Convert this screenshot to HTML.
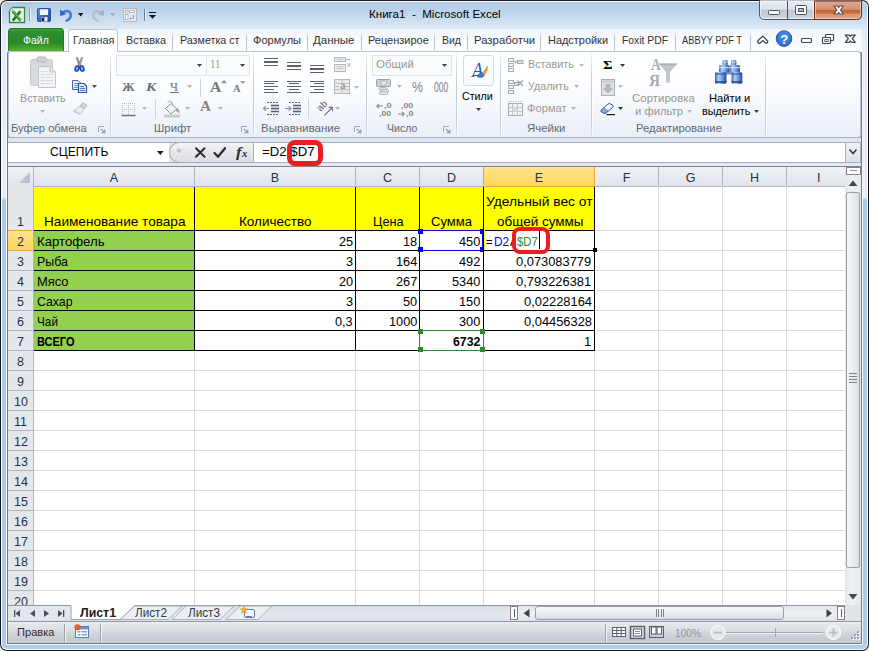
<!DOCTYPE html><html><head><meta charset="utf-8"><title>Excel</title><style>
*{box-sizing:border-box;margin:0;padding:0}
html,body{width:869px;height:651px;overflow:hidden;background:#e8e8e8;font-family:"Liberation Sans",sans-serif;}
.a{position:absolute}
#win{position:absolute;left:0;top:0;width:869px;height:651px;border-radius:7px;background:#15181c;overflow:hidden}
#w1{position:absolute;left:1px;top:1px;width:867px;height:649px;border-radius:6px;background:#fbfdff}
#glass{position:absolute;left:2px;top:2px;width:865px;height:647px;border-radius:5px;
 background:linear-gradient(180deg,#afc9e5 0px,#b8d0ea 7px,#c6daef 15px,#d6e4f3 23px,#e0ebf6 30px,#e6eef7 60px,#e6eef8 195px,#aac8e8 198px,#aecbea 640px,#b5cfec 647px);}
#inner{position:absolute;left:6px;top:27px;width:857px;height:618px;background:linear-gradient(180deg,rgba(246,249,252,.0) 0,#f3f7fb 24px,#f6f9fc 100%)}
.t{position:absolute;white-space:nowrap;line-height:1}
.ui{font-size:12px;color:#1e1e1e}
.dis{color:#8d8d8d}
.cell{position:absolute;white-space:nowrap;line-height:1;font-size:14.5px;color:#000}
svg{position:absolute;overflow:visible}
</style></head><body>
<div id="win"><div id="w1"></div><div id="glass"></div><div id="inner"></div>
<div class="t" style="left:368.80px;top:9.07px;font-size:11.5px;color:#000;transform:scaleX(1.0070);transform-origin:0 0;white-space:pre;">Книга1  -  Microsoft Excel</div>
<div class="a" style="left:7px;top:51px;width:855px;height:593px;background:#6f7c8c;border-radius:3px 3px 0 0"></div>
<div class="a" style="left:8px;top:29px;width:853px;height:23px;background:linear-gradient(180deg,rgba(255,255,255,.55),rgba(255,255,255,.8))"></div>
<div class="a" style="left:8px;top:28px;width:56px;height:23px;border-radius:4px 4px 0 0;background:linear-gradient(180deg,#4aa23a 0,#2f8f30 12%,#2a882c 62%,#3f9a2c 78%,#58b02e 100%);border:1px solid #237a25;border-bottom:none"></div>
<div class="t" style="left:23.00px;top:34.69px;font-size:11px;color:#fff;transform:scaleX(0.9544);transform-origin:0 0;">Файл</div>
<div class="a" style="left:8px;top:51px;width:853px;height:87px;border:1px solid #b9c4d3;border-radius:3px;background:linear-gradient(180deg,#ffffff 0,#fdfeff 35%,#f3f6fb 70%,#eaeff6 100%)"></div>
<div class="a" style="left:68px;top:29px;width:50px;height:23px;border:1px solid #b9c4d3;border-bottom:none;border-radius:3px 3px 0 0;background:#fff"></div>
<div class="t" style="left:72.50px;top:34.69px;font-size:11px;color:#333;transform:scaleX(0.9861);transform-origin:0 0;">Главная</div>
<div class="t" style="left:126.30px;top:34.69px;font-size:11px;color:#333;transform:scaleX(0.9782);transform-origin:0 0;">Вставка</div>
<div class="t" style="left:180.00px;top:34.69px;font-size:11px;color:#333;transform:scaleX(0.9733);transform-origin:0 0;">Разметка ст</div>
<div class="t" style="left:252.50px;top:34.69px;font-size:11px;color:#333;transform:scaleX(1.0026);transform-origin:0 0;">Формулы</div>
<div class="t" style="left:313.00px;top:34.69px;font-size:11px;color:#333;transform:scaleX(1.0444);transform-origin:0 0;">Данные</div>
<div class="t" style="left:368.00px;top:34.69px;font-size:11px;color:#333;transform:scaleX(0.9986);transform-origin:0 0;">Рецензирое</div>
<div class="t" style="left:442.00px;top:34.69px;font-size:11px;color:#333;transform:scaleX(0.9543);transform-origin:0 0;">Вид</div>
<div class="t" style="left:473.80px;top:34.69px;font-size:11px;color:#333;transform:scaleX(1.0313);transform-origin:0 0;">Разработчи</div>
<div class="t" style="left:548.00px;top:34.69px;font-size:11px;color:#333;transform:scaleX(0.9940);transform-origin:0 0;">Надстройки</div>
<div class="t" style="left:622.00px;top:34.69px;font-size:11px;color:#333;transform:scaleX(0.9408);transform-origin:0 0;">Foxit PDF</div>
<div class="t" style="left:682.00px;top:34.69px;font-size:11px;color:#333;transform:scaleX(0.8437);transform-origin:0 0;">ABBYY PDF T</div>
<div class="a" style="left:172px;top:31px;width:1px;height:19px;background:linear-gradient(180deg,rgba(180,192,208,0),#b4c0d0 40%,#b4c0d0 100%)"></div>
<div class="a" style="left:246px;top:31px;width:1px;height:19px;background:linear-gradient(180deg,rgba(180,192,208,0),#b4c0d0 40%,#b4c0d0 100%)"></div>
<div class="a" style="left:307px;top:31px;width:1px;height:19px;background:linear-gradient(180deg,rgba(180,192,208,0),#b4c0d0 40%,#b4c0d0 100%)"></div>
<div class="a" style="left:361px;top:31px;width:1px;height:19px;background:linear-gradient(180deg,rgba(180,192,208,0),#b4c0d0 40%,#b4c0d0 100%)"></div>
<div class="a" style="left:434px;top:31px;width:1px;height:19px;background:linear-gradient(180deg,rgba(180,192,208,0),#b4c0d0 40%,#b4c0d0 100%)"></div>
<div class="a" style="left:467px;top:31px;width:1px;height:19px;background:linear-gradient(180deg,rgba(180,192,208,0),#b4c0d0 40%,#b4c0d0 100%)"></div>
<div class="a" style="left:540px;top:31px;width:1px;height:19px;background:linear-gradient(180deg,rgba(180,192,208,0),#b4c0d0 40%,#b4c0d0 100%)"></div>
<div class="a" style="left:614px;top:31px;width:1px;height:19px;background:linear-gradient(180deg,rgba(180,192,208,0),#b4c0d0 40%,#b4c0d0 100%)"></div>
<div class="a" style="left:675px;top:31px;width:1px;height:19px;background:linear-gradient(180deg,rgba(180,192,208,0),#b4c0d0 40%,#b4c0d0 100%)"></div>
<svg style="left:8px;top:6px" width="18" height="18">
<path d="M4.500,1.500 H16.500 V16.500 H1.500 V4.500 Z" fill="#eef2ee" stroke="#2f8f2f" stroke-width="1.300"/>
<path d="M1.500,4.500 L4.500,1.500 V4.500 Z" fill="#d5dde8" stroke="#9aa6b4" stroke-width=".6"/>
<path d="M4.800,5.200 L12.600,14.600 M12.600,5.200 L4.800,14.600" stroke="#237d23" stroke-width="2.800"/>
<path d="M5.300,5 L12.300,13.600" stroke="#79cc55" stroke-width="1.100"/>
<path d="M12.500,6 L14.500,8 M12.500,14 L14.500,12" stroke="#c9d2c9" stroke-width="1"/>
</svg>
<div class="a" style="left:29px;top:9px;width:1px;height:12px;background:#8d97a5"></div>
<div class="a" style="left:30px;top:9px;width:1px;height:12px;background:rgba(255,255,255,.7)"></div>
<svg style="left:37px;top:8px" width="14" height="14">
<defs><linearGradient id="sv" x1="0" y1="0" x2="1" y2="1"><stop offset="0" stop-color="#6a96dc"/><stop offset=".5" stop-color="#3a68c2"/><stop offset="1" stop-color="#2446a0"/></linearGradient></defs><rect x=".5" y=".5" width="13" height="13" rx="1" fill="url(#sv)" stroke="#2a4c9c" stroke-width="1"/>
<rect x="3" y="1" width="8" height="6" fill="#f4f7fb"/>
<rect x="3" y="1" width="8" height="1.2" fill="#c9d6ea"/>
<rect x="4" y="9" width="6.5" height="4.5" fill="#e6ebf3"/>
<rect x="4.5" y="9.5" width="2.8" height="3.5" fill="#1d1d2b"/>
</svg>
<svg style="left:59px;top:8px" width="15" height="14">
<path d="M3.2,5.2 C5.5,2.2 11.2,2 11.6,6.4 C11.9,9.6 9.8,11.8 7.6,12.6" fill="none" stroke="#3d79d6" stroke-width="2.6" stroke-linecap="round"/>
<polygon points="1,1.5 1.2,8 7.2,6.2" fill="#2f66c4"/>
</svg>
<svg style="left:78px;top:13px" width="6" height="4"><polygon points="0,0 5.4,0 2.7,3.4" fill="#111"/></svg>
<svg style="left:91px;top:8px" width="15" height="14">
<path d="M10.8,5.6 C8.6,2.2 2.6,2.2 2.4,6.6 C2.2,9.8 4.2,11.8 6.4,12.6" fill="none" stroke="#b9bfc8" stroke-width="2.6" stroke-linecap="round"/>
<polygon points="13,1.5 12.8,8 6.8,6.2" fill="#aab1bb"/>
</svg>
<svg style="left:110px;top:13px" width="6" height="4"><polygon points="0,0 5.4,0 2.7,3.4" fill="#a3abb6"/></svg>
<svg style="left:123px;top:8px" width="14" height="14">
<rect x=".5" y=".5" width="13" height="13" fill="#e9ebee" stroke="#b3b8bf" stroke-width="1"/>
<rect x="2.5" y="2.5" width="2.5" height="2.5" fill="#fff" stroke="#a7adb6" stroke-width=".8"/>
<rect x="6.5" y="2.5" width="5" height="2" fill="#fff" stroke="#a7adb6" stroke-width=".8"/>
<rect x="2.5" y="6.5" width="2.5" height="5" fill="#fff" stroke="#a7adb6" stroke-width=".8"/>
<path d="M7,10.5 H10.5 V7.5 M9.5,8.5 L10.5,7.2 L11.5,8.5 M8,9.5 L6.8,10.5 L8,11.5" fill="none" stroke="#9aa1ab" stroke-width=".9"/>
</svg>
<div class="a" style="left:144px;top:9px;width:1px;height:12px;background:#6f7883"></div>
<div class="a" style="left:145px;top:9px;width:1px;height:12px;background:rgba(255,255,255,.7)"></div>
<div class="a" style="left:149px;top:12px;width:7px;height:1.2px;background:#111"></div>
<svg style="left:149px;top:15.300px" width="8" height="5"><polygon points="0,0 7,0 3.5,3.800" fill="#111"/></svg>
<svg style="left:758px;top:0px" width="106" height="22">
<defs>
<linearGradient id="gb" x1="0" y1="0" x2="0" y2="1"><stop offset="0" stop-color="#e9eef4"/><stop offset=".48" stop-color="#dbe3ec"/><stop offset=".5" stop-color="#bcc7d4"/><stop offset="1" stop-color="#cdd6e1"/></linearGradient>
<linearGradient id="gc" x1="0" y1="0" x2="0" y2="1"><stop offset="0" stop-color="#dcaa98"/><stop offset=".3" stop-color="#d89a82"/><stop offset=".47" stop-color="#d48a68"/><stop offset=".5" stop-color="#c4662e"/><stop offset=".66" stop-color="#c86e36"/><stop offset=".7" stop-color="#d89474"/><stop offset=".95" stop-color="#dba286"/><stop offset="1" stop-color="#f1dcb8"/></linearGradient>
</defs>
<path d="M1.5,0 V14.5 Q1.5,19.5 6.5,19.5 H98.5 Q103.5,19.5 103.5,14.5 V0 Z" fill="url(#gb)" stroke="#4d5560" stroke-width="1"/>
<path d="M56.5,1 V19.5 H98.5 Q103.5,19.5 103.5,14.5 V1 Z" fill="url(#gc)" stroke="#6b2a1a" stroke-width="1"/>
<path d="M2.5,1 V14.5 Q2.5,18.5 6.5,18.5 H55.5 V1 Z" fill="none" stroke="rgba(255,255,255,.65)" stroke-width="1"/>
<path d="M57.5,1.5 V18.5 H98.5 Q102.5,18.5 102.5,14.5 V1.5" fill="none" stroke="rgba(255,230,200,.55)" stroke-width="1"/>
<path d="M29.5,1 V19" stroke="#4d5560" stroke-width="1"/>
<rect x="10.5" y="10.5" width="11" height="4" rx=".8" fill="#fff" stroke="#4a5561" stroke-width="1"/>
<rect x="37.5" y="5.500" width="11" height="9" rx=".8" fill="#fff" stroke="#4a5561" stroke-width="1"/>
<rect x="40.500" y="8.5" width="5" height="3" fill="#aeb8c6" stroke="#4a5561" stroke-width="1"/>
<polygon points="76.00,6.00 79.70,6.00 80.70,7.40 81.70,6.00 85.40,6.00 82.55,10.00 85.40,14.00 81.70,14.00 80.70,12.60 79.70,14.00 76.00,14.00 78.85,10.00" fill="#fff" stroke="#5b4d52" stroke-width="1.200" stroke-linejoin="round"/>
</svg>
<div class="a" style="left:750px;top:31px;width:1px;height:19px;background:linear-gradient(180deg,rgba(180,192,208,0),#b4c0d0 40%,#b4c0d0 100%)"></div>
<svg style="left:755px;top:30px" width="108" height="20">
<path d="M4.300,11.600 L7.700,8.200 L11.100,11.600" fill="none" stroke="#3e4650" stroke-width="4.400" stroke-linejoin="round" stroke-linecap="round"/>
<path d="M4.300,11.600 L7.700,8.200 L11.100,11.600" fill="none" stroke="#fff" stroke-width="2" stroke-linejoin="round" stroke-linecap="round"/>
<circle cx="29" cy="8.600" r="7.800" fill="#2f74d0" stroke="#1f58b0" stroke-width="1"/>
<circle cx="29" cy="6.500" r="6" fill="#4d8fe6" opacity=".55"/>
<rect x="46.500" y="8.500" width="10" height="4" rx="1" fill="#fff" stroke="#3e4650" stroke-width="1.200"/>
<rect x="70.500" y="4.500" width="8" height="6" rx=".8" fill="#fff" stroke="#3e4650" stroke-width="1.200"/>
<rect x="67.500" y="7.500" width="8" height="6" rx=".8" fill="#fff" stroke="#3e4650" stroke-width="1.200"/>
<rect x="69.800" y="9.600" width="3.400" height="1.800" fill="#cdd3dc" stroke="#3e4650" stroke-width=".8"/>
<polygon points="90.30,5.10 94.10,5.10 95.30,6.49 96.50,5.10 100.30,5.10 97.20,8.70 100.30,12.30 96.50,12.30 95.30,10.91 94.10,12.30 90.30,12.30 93.40,8.70" fill="#fff" stroke="#3e4650" stroke-width="1.300" stroke-linejoin="round"/>
</svg>
<div class="t" style="left:780.3px;top:32.5px;font-size:13px;font-weight:bold;color:#fff">?</div>
<div class="a" style="left:110px;top:53px;width:1px;height:83px;background:linear-gradient(180deg,rgba(200,207,218,.2),#c5ccd7 30%,#c5ccd7 85%,rgba(200,207,218,.4))"></div>
<div class="a" style="left:111px;top:53px;width:1px;height:83px;background:rgba(255,255,255,.8)"></div>
<div class="a" style="left:253px;top:53px;width:1px;height:83px;background:linear-gradient(180deg,rgba(200,207,218,.2),#c5ccd7 30%,#c5ccd7 85%,rgba(200,207,218,.4))"></div>
<div class="a" style="left:254px;top:53px;width:1px;height:83px;background:rgba(255,255,255,.8)"></div>
<div class="a" style="left:366px;top:53px;width:1px;height:83px;background:linear-gradient(180deg,rgba(200,207,218,.2),#c5ccd7 30%,#c5ccd7 85%,rgba(200,207,218,.4))"></div>
<div class="a" style="left:367px;top:53px;width:1px;height:83px;background:rgba(255,255,255,.8)"></div>
<div class="a" style="left:456px;top:53px;width:1px;height:83px;background:linear-gradient(180deg,rgba(200,207,218,.2),#c5ccd7 30%,#c5ccd7 85%,rgba(200,207,218,.4))"></div>
<div class="a" style="left:457px;top:53px;width:1px;height:83px;background:rgba(255,255,255,.8)"></div>
<div class="a" style="left:500px;top:53px;width:1px;height:83px;background:linear-gradient(180deg,rgba(200,207,218,.2),#c5ccd7 30%,#c5ccd7 85%,rgba(200,207,218,.4))"></div>
<div class="a" style="left:501px;top:53px;width:1px;height:83px;background:rgba(255,255,255,.8)"></div>
<div class="a" style="left:591px;top:53px;width:1px;height:83px;background:linear-gradient(180deg,rgba(200,207,218,.2),#c5ccd7 30%,#c5ccd7 85%,rgba(200,207,218,.4))"></div>
<div class="a" style="left:592px;top:53px;width:1px;height:83px;background:rgba(255,255,255,.8)"></div>
<div class="a" style="left:765px;top:53px;width:1px;height:83px;background:linear-gradient(180deg,rgba(200,207,218,.2),#c5ccd7 30%,#c5ccd7 85%,rgba(200,207,218,.4))"></div>
<div class="a" style="left:766px;top:53px;width:1px;height:83px;background:rgba(255,255,255,.8)"></div>
<svg style="left:29px;top:56px" width="29" height="33">
<rect x="1.500" y="3.500" width="22" height="26" rx="2" fill="#d9dadc" stroke="#c4c6ca" stroke-width="1"/>
<rect x="8" y="1" width="9" height="5" rx="1.500" fill="#cfd1d4" stroke="#b4b7bc" stroke-width="1"/>
<path d="M9.500,10.500 H21 L26.500,16 V31.500 H9.500 Z" fill="#f3f4f5" stroke="#c0c3c8" stroke-width="1"/>
<path d="M21,10.500 V16 H26.500" fill="#e2e4e7" stroke="#c0c3c8" stroke-width="1"/>
<path d="M12,15.500H19M12,18.500H24M12,21.500H24M12,24.500H24M12,27.500H24" stroke="#c9ccd1" stroke-width="1" stroke-dasharray="1.500,1"/>
</svg>
<div class="t" style="left:19.70px;top:93.19px;font-size:11px;color:#9a9690;transform:scaleX(0.9798);transform-origin:0 0;">Вставить</div>
<svg style="left:40px;top:110px" width="6" height="3.9"><polygon points="0,0 5,0 2.5,2.9" fill="#b3b7bd"/></svg>
<svg style="left:74px;top:57px" width="11" height="16">
<path d="M2.200,0.500 L3.600,0.500 L6.600,8.500 L5.200,9.500 Z" fill="#8a8f9a" stroke="#5f6570" stroke-width=".5"/>
<path d="M8.800,0.500 L7.400,0.500 L4.400,8.500 L5.800,9.500 Z" fill="#a9aeb8" stroke="#5f6570" stroke-width=".5"/>
<ellipse cx="3" cy="11.500" rx="1.800" ry="2.600" transform="rotate(18 3 11.500)" fill="#9dbcf0" stroke="#1f4db4" stroke-width="1.700"/>
<ellipse cx="8" cy="11.500" rx="1.800" ry="2.600" transform="rotate(-18 8 11.500)" fill="#9dbcf0" stroke="#1f4db4" stroke-width="1.700"/>
</svg>
<svg style="left:72px;top:79px" width="16" height="15">
<path d="M0.500,1.500 H6 L8.500,4 V10.500 H0.500 Z" fill="#f3f7fd" stroke="#3a66b8" stroke-width="1"/>
<path d="M2,4.500H6M2,6.500H7M2,8.500H7" stroke="#6f95d6" stroke-width="1"/>
<path d="M6.500,4.500 H12 L14.500,7 V13.500 H6.500 Z" fill="#e6effb" stroke="#2a54a8" stroke-width="1.200"/>
<path d="M8,7.500H12M8,9.500H13M8,11.500H13" stroke="#4d7bd0" stroke-width="1"/>
</svg>
<svg style="left:92px;top:85px" width="6" height="3.9"><polygon points="0,0 5,0 2.5,2.9" fill="#4d5056"/></svg>
<svg style="left:72px;top:101px" width="17" height="15">
<path d="M11,1.500 L15,4.500 L12,8 L8,5 Z" fill="#cfd2d6" stroke="#aeb2b8" stroke-width=".8"/>
<path d="M8,5 L12,8 L8.500,13.500 L1,10.500 Z" fill="#ececee" stroke="#b5b8be" stroke-width=".8"/>
<path d="M3,10 L8,12.500" stroke="#c5c8cd" stroke-width="1"/>
</svg>
<div class="t" style="left:11.30px;top:123.19px;font-size:11px;color:#5f6875;transform:scaleX(1.0124);transform-origin:0 0;">Буфер обмена</div>
<svg style="left:98px;top:126px" width="8" height="8"><path d="M0.500,6 V0.500 H6" fill="none" stroke="#a0a7b2" stroke-width="1"/><path d="M3,3 L6.500,6.500 M6.800,3.500 V6.800 H3.500" fill="none" stroke="#9299a5" stroke-width="1.100"/></svg>
<div class="a" style="left:116px;top:55px;width:91px;height:21px;background:rgba(250,251,253,.9);border:1px solid #e1e5ec"></div>
<div class="a" style="left:207px;top:55px;width:43px;height:21px;background:rgba(250,251,253,.9);border:1px solid #e1e5ec;border-left:none"></div>
<svg style="left:197px;top:63.5px" width="6" height="3.9"><polygon points="0,0 5,0 2.5,2.9" fill="#3c3f45"/></svg>
<svg style="left:240px;top:63.5px" width="6" height="3.9"><polygon points="0,0 5,0 2.5,2.9" fill="#3c3f45"/></svg>
<div class="t" style="left:210.00px;top:58.30px;font-size:12px;color:#a39a8c;transform:scaleX(0.9091);transform-origin:0 0;font-family:'Liberation Serif',serif;">11</div>
<div class="t" style="left:121.70px;top:80.16px;font-size:13px;color:#6e6e6e;transform:scaleX(0.9790);transform-origin:0 0;font-weight:bold;font-family:'Liberation Serif',serif;">Ж</div>
<div class="t" style="left:145.61px;top:80.16px;font-size:13px;color:#6e6e6e;transform:scaleX(1.1762);transform-origin:0 0;font-weight:bold;font-style:italic;font-family:'Liberation Serif',serif;">К</div>
<div class="t" style="left:170.00px;top:79.66px;font-size:13px;color:#6e6e6e;transform:scaleX(0.9467);transform-origin:0 0;font-family:'Liberation Serif',serif;">Ч</div>
<div class="a" style="left:170px;top:92px;width:8.5px;height:1px;background:#6e6e6e"></div>
<svg style="left:187px;top:85px" width="6" height="3.9"><polygon points="0,0 5,0 2.5,2.9" fill="#b3b7bd"/></svg>
<div class="a" style="left:200px;top:79px;width:1px;height:18px;background:#cfd4dc"></div>
<div class="t" style="left:209.70px;top:80.00px;font-size:15px;color:#777;transform:scaleX(1.0427);transform-origin:0 0;font-weight:bold;font-family:'Liberation Serif',serif;">A</div>
<svg style="left:221px;top:80px" width="7" height="4"><polygon points="0,3.200 6,3.200 3,0" fill="#8e9197"/></svg>
<div class="t" style="left:233.00px;top:83.75px;font-size:10.5px;color:#777;transform:scaleX(0.9886);transform-origin:0 0;font-weight:bold;font-family:'Liberation Serif',serif;">A</div>
<svg style="left:239.5px;top:80.5px" width="6.4" height="4"><polygon points="0,0 5.4,0 2.7,3" fill="#9da1a8"/></svg>
<svg style="left:121px;top:102px" width="15" height="15">
<path d="M1,1.500H14M1,7.500H14M1.500,1V13M7.500,1V13M13.500,1V13" stroke="#b5b8bd" stroke-width="1" stroke-dasharray="1,1"/>
<path d="M0.500,13.500H14.500" stroke="#6e7177" stroke-width="1.400"/>
</svg>
<svg style="left:142px;top:107px" width="6" height="3.9"><polygon points="0,0 5,0 2.5,2.9" fill="#b3b7bd"/></svg>
<div class="a" style="left:155px;top:99px;width:1px;height:20px;background:#cfd4dc"></div>
<svg style="left:163px;top:100px" width="19" height="18">
<path d="M5,3 C5,0.500 9,0.500 9,3 V6" fill="none" stroke="#9a9da3" stroke-width="1"/>
<path d="M2.500,8.500 L8,3.500 L14,9 L8,14 Z" fill="#f1f1f2" stroke="#8d9096" stroke-width="1"/>
<path d="M14,8 C16.500,9 17,11.500 16.200,13.500 C15,12 13,11 12,10.500 Z" fill="#a4a7ad"/>
<rect x="1" y="14.500" width="16" height="3" fill="#c9cbcf"/>
</svg>
<svg style="left:185px;top:107px" width="6" height="3.9"><polygon points="0,0 5,0 2.5,2.9" fill="#b3b7bd"/></svg>
<div class="t" style="left:200.00px;top:99.20px;font-size:15px;color:#858585;transform:scaleX(1.0150);transform-origin:0 0;font-weight:bold;font-family:'Liberation Serif',serif;">A</div>
<svg style="left:218px;top:107px" width="6" height="3.9"><polygon points="0,0 5,0 2.5,2.9" fill="#b3b7bd"/></svg>
<div class="t" style="left:153.80px;top:123.19px;font-size:11px;color:#5f6875;transform:scaleX(1.0279);transform-origin:0 0;">Шрифт</div>
<svg style="left:241px;top:126px" width="8" height="8"><path d="M0.500,6 V0.500 H6" fill="none" stroke="#a0a7b2" stroke-width="1"/><path d="M3,3 L6.500,6.500 M6.800,3.500 V6.800 H3.500" fill="none" stroke="#9299a5" stroke-width="1.100"/></svg>
<div class="a" style="left:264px;top:58.0px;width:14px;height:1.4px;background:#5b606b"></div>
<div class="a" style="left:264px;top:61.3px;width:14px;height:1.4px;background:#5b606b"></div>
<div class="a" style="left:264px;top:64.6px;width:14px;height:1.4px;background:#5b606b"></div>
<div class="a" style="left:287px;top:62.0px;width:14px;height:1.4px;background:#5b606b"></div>
<div class="a" style="left:287px;top:65.3px;width:14px;height:1.4px;background:#5b606b"></div>
<div class="a" style="left:287px;top:68.6px;width:14px;height:1.4px;background:#5b606b"></div>
<div class="a" style="left:310px;top:65.0px;width:14px;height:1.4px;background:#5b606b"></div>
<div class="a" style="left:310px;top:68.3px;width:14px;height:1.4px;background:#5b606b"></div>
<div class="a" style="left:310px;top:71.6px;width:14px;height:1.4px;background:#5b606b"></div>
<div class="a" style="left:264px;top:80.5px;width:14px;height:1px;background:#5b606b"></div>
<div class="a" style="left:264px;top:83.3px;width:10px;height:1px;background:#5b606b"></div>
<div class="a" style="left:264px;top:86.1px;width:14px;height:1px;background:#5b606b"></div>
<div class="a" style="left:264px;top:88.9px;width:10px;height:1px;background:#5b606b"></div>
<div class="a" style="left:264px;top:91.7px;width:14px;height:1px;background:#5b606b"></div>
<div class="a" style="left:287.0px;top:80.5px;width:14px;height:1px;background:#5b606b"></div>
<div class="a" style="left:289.0px;top:83.3px;width:10px;height:1px;background:#5b606b"></div>
<div class="a" style="left:287.0px;top:86.1px;width:14px;height:1px;background:#5b606b"></div>
<div class="a" style="left:289.0px;top:88.9px;width:10px;height:1px;background:#5b606b"></div>
<div class="a" style="left:287.0px;top:91.7px;width:14px;height:1px;background:#5b606b"></div>
<div class="a" style="left:310px;top:80.5px;width:14px;height:1px;background:#5b606b"></div>
<div class="a" style="left:314px;top:83.3px;width:10px;height:1px;background:#5b606b"></div>
<div class="a" style="left:310px;top:86.1px;width:14px;height:1px;background:#5b606b"></div>
<div class="a" style="left:314px;top:88.9px;width:10px;height:1px;background:#5b606b"></div>
<div class="a" style="left:310px;top:91.7px;width:14px;height:1px;background:#5b606b"></div>
<svg style="left:334px;top:56px" width="18" height="17">
<rect x=".5" y="1.500" width="11" height="4" fill="#ededef" stroke="#b4b8bf" stroke-width="1"/>
<path d="M2.500,3.500H9.500" stroke="#c3c6cc" stroke-width="1"/>
<rect x=".5" y="8.500" width="11" height="7" fill="#ededef" stroke="#b4b8bf" stroke-width="1"/>
<path d="M2.500,10.500H9.500M2.500,12.500H9.500" stroke="#c3c6cc" stroke-width="1"/>
<path d="M11.500,3.500 H16 M15.800,7 V10 H13 M15.800,10 L13.200,7.400" fill="none" stroke="#aeb2b9" stroke-width="1"/>
</svg>
<svg style="left:334px;top:79px" width="17" height="15">
<rect x=".5" y=".5" width="15" height="14" fill="#e9eaec" stroke="#b4b8bf" stroke-width="1"/>
<path d="M.5,4.500H15.500M.5,10.500H15.500M8,.5V4.500M8,10.500V14.500" stroke="#c0c3c9" stroke-width="1"/>
<rect x="1" y="5" width="14" height="5" fill="#f1f1f3"/>
<path d="M1.500,7.500H5M14.500,7.500H11" stroke="#c9a7a0" stroke-width="1"/>
<path d="M8,4 V5 M8,10 V11" stroke="#e0a090" stroke-width="1"/>
</svg>
<div class="t" style="left:339.50px;top:82.28px;font-size:9.5px;color:#8f9299;transform:scaleX(1.1579);transform-origin:0 0;font-weight:bold;font-family:'Liberation Serif',serif;">a</div>
<svg style="left:354px;top:86px" width="6" height="3.9"><polygon points="0,0 5,0 2.5,2.9" fill="#b3b7bd"/></svg>
<svg style="left:263px;top:101px" width="17" height="16"><path d="M4,1.5H16" stroke="#5b606b" stroke-width="1" stroke-dasharray="2,1"/><path d="M8,4.5H16" stroke="#5b606b" stroke-width="1.600"/><path d="M8,7.5H16" stroke="#5b606b" stroke-width="1.600"/><path d="M8,10.5H16" stroke="#5b606b" stroke-width="1.600"/><path d="M4,13.5H16" stroke="#5b606b" stroke-width="1" stroke-dasharray="2,1"/><path d="M0.500,7.500H6 M2.800,5.200 L0.500,7.500 L2.800,9.800" fill="none" stroke="#8b8f97" stroke-width="1.100"/></svg>
<svg style="left:285px;top:101px" width="17" height="16"><path d="M4,1.5H16" stroke="#5b606b" stroke-width="1" stroke-dasharray="2,1"/><path d="M8,4.5H16" stroke="#5b606b" stroke-width="1.600"/><path d="M8,7.5H16" stroke="#5b606b" stroke-width="1.600"/><path d="M8,10.5H16" stroke="#5b606b" stroke-width="1.600"/><path d="M4,13.5H16" stroke="#5b606b" stroke-width="1" stroke-dasharray="2,1"/><path d="M0,7.500H5.500 M3.500,5.200 L6,7.500 L3.500,9.800" fill="none" stroke="#8b8f97" stroke-width="1.100"/></svg>
<div class="a" style="left:308px;top:99px;width:1px;height:20px;background:#cfd4dc"></div>
<svg style="left:316px;top:101px" width="19" height="16">
<path d="M8.200,14.600 L15.800,7 M12.600,6.400 H16.400 V10.200" fill="none" stroke="#72757c" stroke-width="1.100"/>
<text x="0" y="0" transform="translate(4.600,10.800) rotate(-45)" font-family="Liberation Sans" font-size="9.500" fill="#5d6067">ab</text>
</svg>
<svg style="left:335px;top:107px" width="6" height="3.9"><polygon points="0,0 5,0 2.5,2.9" fill="#b3b7bd"/></svg>
<div class="t" style="left:261.30px;top:123.19px;font-size:11px;color:#5f6875;transform:scaleX(1.0435);transform-origin:0 0;">Выравнивание</div>
<svg style="left:354px;top:126px" width="8" height="8"><path d="M0.500,6 V0.500 H6" fill="none" stroke="#a0a7b2" stroke-width="1"/><path d="M3,3 L6.500,6.500 M6.800,3.500 V6.800 H3.500" fill="none" stroke="#9299a5" stroke-width="1.100"/></svg>
<div class="a" style="left:372px;top:55px;width:80px;height:21px;background:rgba(250,251,253,.9);border:1px solid #e1e5ec"></div>
<div class="t" style="left:375.80px;top:58.69px;font-size:11px;color:#9b9892;transform:scaleX(1.0473);transform-origin:0 0;">Общий</div>
<svg style="left:442px;top:63.5px" width="6" height="3.9"><polygon points="0,0 5,0 2.5,2.9" fill="#3c3f45"/></svg>
<svg style="left:375px;top:78px" width="18" height="17">
<rect x="1.500" y="1.500" width="14" height="7" rx="1" fill="#cfd1d5" stroke="#9da1a8" stroke-width="1"/>
<ellipse cx="8.500" cy="5" rx="3.200" ry="2.200" fill="#e9eaec" stroke="#a4a8ae" stroke-width=".8"/>
<ellipse cx="8" cy="11" rx="4.500" ry="1.400" fill="#ececee" stroke="#9da1a8" stroke-width=".8"/>
<ellipse cx="9.500" cy="13" rx="4.500" ry="1.400" fill="#ececee" stroke="#9da1a8" stroke-width=".8"/>
<ellipse cx="8.500" cy="15" rx="4.500" ry="1.400" fill="#ececee" stroke="#9da1a8" stroke-width=".8"/>
</svg>
<svg style="left:397px;top:85px" width="6" height="3.9"><polygon points="0,0 5,0 2.5,2.9" fill="#b3b7bd"/></svg>
<div class="t" style="left:412.00px;top:80.15px;font-size:14px;color:#808288;transform:scaleX(0.8828);transform-origin:0 0;">%</div>
<div class="t" style="left:433.70px;top:80.15px;font-size:14px;color:#808288;transform:scaleX(0.6126);transform-origin:0 0;">000</div>
<div class="t" style="left:383.60px;top:101.73px;font-size:8px;color:#85888e;transform:scaleX(1.1527);transform-origin:0 0;font-weight:bold;">,0</div>
<div class="t" style="left:379.30px;top:109.53px;font-size:8px;color:#85888e;transform:scaleX(1.0791);transform-origin:0 0;font-weight:bold;">,00</div>
<svg style="left:376.3px;top:103px" width="8" height="6"><path d="M0.800,3 H7 M3,0.800 L0.800,3 L3,5.200" fill="none" stroke="#85888e" stroke-width="1.100"/></svg>
<div class="t" style="left:401.30px;top:101.73px;font-size:8px;color:#85888e;transform:scaleX(1.0791);transform-origin:0 0;font-weight:bold;">,00</div>
<div class="t" style="left:405.60px;top:109.53px;font-size:8px;color:#85888e;transform:scaleX(1.1527);transform-origin:0 0;font-weight:bold;">,0</div>
<svg style="left:398.3px;top:111px" width="8" height="6"><path d="M0,3 H6.200 M4,0.800 L6.200,3 L4,5.200" fill="none" stroke="#85888e" stroke-width="1.100"/></svg>
<div class="t" style="left:386.70px;top:123.19px;font-size:11px;color:#5f6875;transform:scaleX(0.9581);transform-origin:0 0;">Число</div>
<svg style="left:443px;top:126px" width="8" height="8"><path d="M0.500,6 V0.500 H6" fill="none" stroke="#a0a7b2" stroke-width="1"/><path d="M3,3 L6.500,6.500 M6.800,3.500 V6.800 H3.500" fill="none" stroke="#9299a5" stroke-width="1.100"/></svg>
<div class="a" style="left:463px;top:55px;width:31px;height:31px;border:1px solid #d5dae3;border-radius:3px;background:linear-gradient(180deg,#fff,#f8f9fb)"></div>
<div class="t" style="left:471.80px;top:59.80px;font-size:21px;color:#2a55a5;transform:scaleX(0.8671);transform-origin:0 0;font-style:italic;font-family:'Liberation Serif',serif;">A</div>
<div class="a" style="left:473px;top:74.5px;width:9px;height:1px;background:#2a55a5"></div>
<svg style="left:477px;top:66px" width="12" height="13"><path d="M0.500,11 C1,8 3.500,6.500 5.500,6.800 L7.500,9 C6.500,11.500 3,12 0.500,11 Z" fill="#3f7bd0" stroke="#2558ae" stroke-width=".6"/><path d="M5.500,6.800 L9.500,2 L10.800,3 L7.500,9 Z" fill="#e9a13a" stroke="#b56a1c" stroke-width=".4"/><path d="M9.500,2 L10.800,0.300" stroke="#b23a2a" stroke-width="1"/></svg>
<div class="t" style="left:462.40px;top:91.39px;font-size:11px;color:#000;transform:scaleX(0.9722);transform-origin:0 0;">Стили</div>
<svg style="left:476.2px;top:108.2px" width="6" height="3.9"><polygon points="0,0 5,0 2.5,2.9" fill="#3c3f45"/></svg>
<svg style="left:507px;top:57px" width="18" height="16">
<rect x="1.500" y="1.500" width="5" height="3" fill="#f4f4f5" stroke="#a7abb2" stroke-width="1"/>
<rect x="1.500" y="6.500" width="5" height="3" fill="#f4f4f5" stroke="#a7abb2" stroke-width="1"/>
<rect x="1.500" y="11.500" width="5" height="3" fill="#f4f4f5" stroke="#a7abb2" stroke-width="1"/>
<rect x="10.500" y="3.500" width="5.500" height="3" fill="#dcdde0" stroke="#a7abb2" stroke-width="1"/>
<path d="M10,5 H7.500 M8.800,3.800 L7.500,5 L8.800,6.200" fill="none" stroke="#8e9299" stroke-width=".9"/>
</svg>
<div class="t" style="left:527.50px;top:58.69px;font-size:11px;color:#9a9a98;transform:scaleX(0.9820);transform-origin:0 0;">Вставить</div>
<svg style="left:579px;top:63.5px" width="6" height="3.9"><polygon points="0,0 5,0 2.5,2.9" fill="#b3b7bd"/></svg>
<svg style="left:507px;top:79px" width="18" height="16">
<rect x="1.500" y="1.500" width="5" height="3" fill="#f4f4f5" stroke="#a7abb2" stroke-width="1"/>
<rect x="1.500" y="6.500" width="5" height="3" fill="#f4f4f5" stroke="#a7abb2" stroke-width="1"/>
<rect x="1.500" y="11.500" width="5" height="3" fill="#f4f4f5" stroke="#a7abb2" stroke-width="1"/>
<rect x="7.500" y="3.500" width="4" height="3" fill="#dcdde0" stroke="#a7abb2" stroke-width="1"/>
<path d="M10.500,1.500 L16,7 M16,1.500 L10.500,7" stroke="#9da1a8" stroke-width="1.300"/>
</svg>
<div class="t" style="left:527.50px;top:80.69px;font-size:11px;color:#9a9a98;transform:scaleX(0.9716);transform-origin:0 0;">Удалить</div>
<svg style="left:574px;top:85px" width="6" height="3.9"><polygon points="0,0 5,0 2.5,2.9" fill="#b3b7bd"/></svg>
<svg style="left:507px;top:100px" width="18" height="17">
<rect x="1.500" y="3.500" width="14" height="12" fill="#f1f1f2" stroke="#a7abb2" stroke-width="1"/>
<path d="M1.500,7.500H15.500M1.500,11.500H15.500M5.500,3.500V15.500M10.500,3.500V15.500" stroke="#bfc2c7" stroke-width="1"/>
<rect x="5.500" y="7.500" width="5" height="4" fill="#d7d9dc"/>
<path d="M1,1.500 H16" stroke="#a7abb2" stroke-width="1" stroke-dasharray="1,1.500"/>
</svg>
<div class="t" style="left:527.00px;top:102.69px;font-size:11px;color:#9a9a98;transform:scaleX(1.0159);transform-origin:0 0;">Формат</div>
<svg style="left:571.4px;top:107px" width="6" height="3.9"><polygon points="0,0 5,0 2.5,2.9" fill="#b3b7bd"/></svg>
<div class="t" style="left:526.70px;top:123.19px;font-size:11px;color:#5f6875;transform:scaleX(1.0378);transform-origin:0 0;">Ячейки</div>
<div class="t" style="left:603.00px;top:57.86px;font-size:13px;color:#000;transform:scaleX(1.1157);transform-origin:0 0;font-weight:bold;font-family:'Liberation Serif',serif;">Σ</div>
<svg style="left:620px;top:63.5px" width="6" height="3.9"><polygon points="0,0 5,0 2.5,2.9" fill="#33363b"/></svg>
<svg style="left:600.500px;top:78.500px" width="15" height="17">
<rect x=".5" y=".5" width="13" height="16" fill="#e2e3e6" stroke="#aeb2b8" stroke-width="1"/>
<rect x="1" y="1" width="12" height="3" fill="#cfd1d5"/>
<path d="M5,5.500 H9 V9.500 H11.500 L7,14 L2.500,9.500 H5 Z" fill="#b4b7bd" stroke="#9a9ea5" stroke-width=".6"/>
</svg>
<svg style="left:618.3px;top:85px" width="6" height="3.9"><polygon points="0,0 5,0 2.5,2.9" fill="#b3b7bd"/></svg>
<svg style="left:600px;top:102px" width="16" height="14">
<path d="M1.200,8.200 L7.800,2.200 Q9,1.300 10.300,1.800 L12.800,3.200 Q13.800,4.200 12.800,5.200 L6.400,10.800 Q5.200,11.600 4,11.200 L1.600,10 Q0.600,9.200 1.200,8.200 Z" fill="#f4f7fc" stroke="#2b4f9e" stroke-width="1"/>
<path d="M1.200,8.200 L3.600,6 L7.800,8.800 L6.400,10.800 Q5.200,11.600 4,11.200 L1.600,10 Q0.600,9.200 1.200,8.200 Z" fill="#8aa8dc" stroke="#2b4f9e" stroke-width=".6"/>
<path d="M6.500,12.600 H15" stroke="#1c1c1c" stroke-width="1.200"/>
</svg>
<svg style="left:618.3px;top:107px" width="6" height="3.9"><polygon points="0,0 5,0 2.5,2.9" fill="#33363b"/></svg>
<div class="t" style="left:650.80px;top:55.83px;font-size:17px;color:#a9acb2;transform:scaleX(0.7897);transform-origin:0 0;font-weight:bold;font-family:'Liberation Serif',serif;">A</div>
<div class="t" style="left:649.00px;top:71.63px;font-size:17px;color:#a9acb2;transform:scaleX(0.8956);transform-origin:0 0;font-weight:bold;font-family:'Liberation Serif',serif;">Я</div>
<svg style="left:658px;top:62px" width="21" height="23">
<path d="M0.500,1.500 H19.500 L12,10 V20.500 H8 V10 Z" fill="#c3c5ca"/>
<path d="M0.500,1.500 H19.500 L18,3.200 H2 Z" fill="#aeb1b7"/>
</svg>
<div class="t" style="left:632.00px;top:93.19px;font-size:11px;color:#9a9690;transform:scaleX(1.0432);transform-origin:0 0;">Сортировка</div>
<div class="t" style="left:635.00px;top:105.99px;font-size:11px;color:#9a9690;transform:scaleX(1.0249);transform-origin:0 0;">и фильтр</div>
<svg style="left:686.7px;top:110px" width="6" height="3.9"><polygon points="0,0 5,0 2.5,2.9" fill="#b3b7bd"/></svg>
<svg style="left:714px;top:58px" width="30" height="27">
<defs><linearGradient id="bn" x1="0" y1="0" x2="1" y2="0"><stop offset="0" stop-color="#3563b8"/><stop offset=".3" stop-color="#b4cef2"/><stop offset=".55" stop-color="#84a9e2"/><stop offset="1" stop-color="#244f9e"/></linearGradient></defs>
<rect x="8.400" y="2" width="5.400" height="5.500" rx="1.500" fill="url(#bn)"/><rect x="17" y="2" width="5.400" height="5.500" rx="1.500" fill="url(#bn)"/>
<rect x="8.400" y="3.600" width="5.400" height="1" fill="#dbe8f8" opacity=".8"/><rect x="17" y="3.600" width="5.400" height="1" fill="#dbe8f8" opacity=".8"/>
<rect x="5" y="7" width="10.400" height="8" rx="1.500" fill="url(#bn)"/><rect x="15.400" y="7" width="10.600" height="8" rx="1.500" fill="url(#bn)"/>
<rect x="5" y="9" width="10.400" height="1.200" fill="#e3edfa" opacity=".75"/><rect x="15.400" y="9" width="10.600" height="1.200" fill="#e3edfa" opacity=".75"/>
<rect x="1" y="14" width="11.500" height="12" rx="2" fill="url(#bn)"/><rect x="17.500" y="14" width="10.800" height="12" rx="2" fill="url(#bn)"/>
<rect x="1" y="15.500" width="11.500" height="1" fill="#21489a"/><rect x="17.500" y="15.500" width="10.800" height="1" fill="#21489a"/>
<rect x="1" y="23.300" width="11.500" height="1.300" fill="#16367e"/><rect x="17.500" y="23.300" width="10.800" height="1.300" fill="#16367e"/>
<rect x="12.500" y="14.500" width="5" height="2" fill="#5a86cf"/>
</svg>
<div class="t" style="left:708.70px;top:93.19px;font-size:11px;color:#000;transform:scaleX(1.0175);transform-origin:0 0;">Найти и</div>
<div class="t" style="left:701.70px;top:105.99px;font-size:11px;color:#000;transform:scaleX(0.9807);transform-origin:0 0;">выделить</div>
<svg style="left:754.3px;top:110px" width="6" height="3.9"><polygon points="0,0 5,0 2.5,2.9" fill="#3c3f45"/></svg>
<div class="t" style="left:635.80px;top:123.19px;font-size:11px;color:#5f6875;transform:scaleX(1.0252);transform-origin:0 0;">Редактирование</div>
<div class="a" style="left:8px;top:138px;width:853px;height:29px;background:linear-gradient(180deg,#dde5f0,#e3eaf3)"></div>
<div class="a" style="left:8px;top:137px;width:853px;height:1px;background:#aab4c3"></div>
<div class="a" style="left:8px;top:142px;width:163px;height:21px;background:#fff;border-top:1px solid #a6b0bf;border-bottom:1px solid #a6b0bf"></div>
<div class="t" style="left:50.30px;top:146.12px;font-size:12.5px;color:#000;transform:scaleX(0.9668);transform-origin:0 0;">СЦЕПИТЬ</div>
<svg style="left:156.500px;top:150.500px" width="8" height="5"><polygon points="0,0 6.600,0 3.300,4" fill="#1a1a1a"/></svg>
<div class="a" style="left:169px;top:142px;width:86px;height:21px;background:#e1e6ee;border-top:1px solid #a6b0bf;border-bottom:1px solid #a6b0bf"></div>
<div class="a" style="left:169px;top:142px;width:90px;height:21px;border-radius:10.500px 0 0 10.500px;background:linear-gradient(180deg,#f4f5f6,#e2e4e7 60%,#dcdee2);border:1px solid #a9adb4;border-right:none"></div>
<svg style="left:174px;top:146px" width="10" height="10"><circle cx="5" cy="5" r="3.200" fill="#d2d4d8" stroke="#f6f6f7" stroke-width="1"/><circle cx="5" cy="4.500" r="1.800" fill="#c0c3c8"/></svg>
<svg style="left:194px;top:146px" width="56" height="14">
<path d="M2,2.200 L10.500,10.800 M10.500,2.200 L2,10.800" stroke="#2b2d31" stroke-width="2" stroke-linecap="round"/>
<path d="M20.500,7 L24,10.800 L31,2.200" fill="none" stroke="#2b2d31" stroke-width="2.300" stroke-linecap="round" stroke-linejoin="round"/>
</svg>
<div class="t" style="left:236.00px;top:144.70px;font-size:15px;color:#2b2d31;transform:scaleX(1.1178);transform-origin:0 0;font-weight:bold;font-style:italic;font-family:'Liberation Serif',serif;">f</div>
<div class="t" style="left:242.13px;top:148.86px;font-size:10px;color:#2b2d31;transform:scaleX(1.0732);transform-origin:0 0;font-weight:bold;font-style:italic;font-family:'Liberation Serif',serif;">x</div>
<div class="a" style="left:253px;top:142px;width:592px;height:21px;background:#fff;border-top:1px solid #a6b0bf;border-bottom:1px solid #a6b0bf;border-left:1px solid #a6b0bf"></div>
<div class="a" style="left:845px;top:142px;width:16px;height:21px;background:linear-gradient(180deg,#f0f2f5,#dfe3ea);border:1px solid #a6b0bf"></div>
<svg style="left:848px;top:148px" width="10" height="8"><path d="M1.500,1.500 L5,5.500 L8.500,1.500" fill="none" stroke="#3e434b" stroke-width="1.800"/></svg>
<div class="t" style="left:262.40px;top:145.20px;font-size:13px;color:#000;transform:scaleX(1.0179);transform-origin:0 0;">=D2/$D7</div>
<div class="a" style="left:8px;top:163px;width:853px;height:3px;background:#e4e8f3"></div>
<div class="a" style="left:8px;top:166px;width:853px;height:1px;background:#8a8186"></div>
<div class="a" style="left:8px;top:167px;width:837px;height:438px;background:#fff"></div>
<div class="a" style="left:8px;top:167px;width:837px;height:20px;background:linear-gradient(180deg,#eef1f5,#e1e5eb);border-bottom:1px solid #b2b7bd"></div>
<div class="a" style="left:8px;top:186px;width:26px;height:419px;background:#e4e8ed;border-right:1px solid #b2b7bd"></div>
<div class="a" style="left:194px;top:186px;width:1px;height:419px;background:#d8dbde"></div>
<div class="a" style="left:194px;top:167px;width:1px;height:19px;background:#b2b7bd"></div>
<div class="a" style="left:355px;top:186px;width:1px;height:419px;background:#d8dbde"></div>
<div class="a" style="left:355px;top:167px;width:1px;height:19px;background:#b2b7bd"></div>
<div class="a" style="left:419px;top:186px;width:1px;height:419px;background:#d8dbde"></div>
<div class="a" style="left:419px;top:167px;width:1px;height:19px;background:#b2b7bd"></div>
<div class="a" style="left:483px;top:186px;width:1px;height:419px;background:#d8dbde"></div>
<div class="a" style="left:483px;top:167px;width:1px;height:19px;background:#b2b7bd"></div>
<div class="a" style="left:594px;top:186px;width:1px;height:419px;background:#d8dbde"></div>
<div class="a" style="left:594px;top:167px;width:1px;height:19px;background:#b2b7bd"></div>
<div class="a" style="left:658px;top:186px;width:1px;height:419px;background:#d8dbde"></div>
<div class="a" style="left:658px;top:167px;width:1px;height:19px;background:#b2b7bd"></div>
<div class="a" style="left:722px;top:186px;width:1px;height:419px;background:#d8dbde"></div>
<div class="a" style="left:722px;top:167px;width:1px;height:19px;background:#b2b7bd"></div>
<div class="a" style="left:786px;top:186px;width:1px;height:419px;background:#d8dbde"></div>
<div class="a" style="left:786px;top:167px;width:1px;height:19px;background:#b2b7bd"></div>
<div class="a" style="left:33px;top:167px;width:1px;height:19px;background:#b2b7bd"></div>
<div class="a" style="left:34px;top:230px;width:811px;height:1px;background:#d8dbde"></div>
<div class="a" style="left:8px;top:230px;width:26px;height:1px;background:#b2b7bd"></div>
<div class="a" style="left:34px;top:250px;width:811px;height:1px;background:#d8dbde"></div>
<div class="a" style="left:8px;top:250px;width:26px;height:1px;background:#b2b7bd"></div>
<div class="a" style="left:34px;top:270px;width:811px;height:1px;background:#d8dbde"></div>
<div class="a" style="left:8px;top:270px;width:26px;height:1px;background:#b2b7bd"></div>
<div class="a" style="left:34px;top:290px;width:811px;height:1px;background:#d8dbde"></div>
<div class="a" style="left:8px;top:290px;width:26px;height:1px;background:#b2b7bd"></div>
<div class="a" style="left:34px;top:310px;width:811px;height:1px;background:#d8dbde"></div>
<div class="a" style="left:8px;top:310px;width:26px;height:1px;background:#b2b7bd"></div>
<div class="a" style="left:34px;top:330px;width:811px;height:1px;background:#d8dbde"></div>
<div class="a" style="left:8px;top:330px;width:26px;height:1px;background:#b2b7bd"></div>
<div class="a" style="left:34px;top:350px;width:811px;height:1px;background:#d8dbde"></div>
<div class="a" style="left:8px;top:350px;width:26px;height:1px;background:#b2b7bd"></div>
<div class="a" style="left:34px;top:370px;width:811px;height:1px;background:#d8dbde"></div>
<div class="a" style="left:8px;top:370px;width:26px;height:1px;background:#b2b7bd"></div>
<div class="a" style="left:34px;top:390px;width:811px;height:1px;background:#d8dbde"></div>
<div class="a" style="left:8px;top:390px;width:26px;height:1px;background:#b2b7bd"></div>
<div class="a" style="left:34px;top:410px;width:811px;height:1px;background:#d8dbde"></div>
<div class="a" style="left:8px;top:410px;width:26px;height:1px;background:#b2b7bd"></div>
<div class="a" style="left:34px;top:430px;width:811px;height:1px;background:#d8dbde"></div>
<div class="a" style="left:8px;top:430px;width:26px;height:1px;background:#b2b7bd"></div>
<div class="a" style="left:34px;top:450px;width:811px;height:1px;background:#d8dbde"></div>
<div class="a" style="left:8px;top:450px;width:26px;height:1px;background:#b2b7bd"></div>
<div class="a" style="left:34px;top:470px;width:811px;height:1px;background:#d8dbde"></div>
<div class="a" style="left:8px;top:470px;width:26px;height:1px;background:#b2b7bd"></div>
<div class="a" style="left:34px;top:490px;width:811px;height:1px;background:#d8dbde"></div>
<div class="a" style="left:8px;top:490px;width:26px;height:1px;background:#b2b7bd"></div>
<div class="a" style="left:34px;top:510px;width:811px;height:1px;background:#d8dbde"></div>
<div class="a" style="left:8px;top:510px;width:26px;height:1px;background:#b2b7bd"></div>
<div class="a" style="left:34px;top:530px;width:811px;height:1px;background:#d8dbde"></div>
<div class="a" style="left:8px;top:530px;width:26px;height:1px;background:#b2b7bd"></div>
<div class="a" style="left:34px;top:550px;width:811px;height:1px;background:#d8dbde"></div>
<div class="a" style="left:8px;top:550px;width:26px;height:1px;background:#b2b7bd"></div>
<div class="a" style="left:34px;top:570px;width:811px;height:1px;background:#d8dbde"></div>
<div class="a" style="left:8px;top:570px;width:26px;height:1px;background:#b2b7bd"></div>
<div class="a" style="left:34px;top:590px;width:811px;height:1px;background:#d8dbde"></div>
<div class="a" style="left:8px;top:590px;width:26px;height:1px;background:#b2b7bd"></div>
<div class="a" style="left:34px;top:187px;width:560px;height:43px;background:#ffff00"></div>
<div class="a" style="left:34px;top:231px;width:160px;height:119px;background:#92d050"></div>
<div class="a" style="left:483px;top:167px;width:112px;height:20px;background:linear-gradient(180deg,#ffe28c,#ffd75f);border:1px solid #eba33c;border-top:none"></div>
<div class="a" style="left:8px;top:230px;width:26px;height:21px;background:linear-gradient(180deg,#ffe28c,#ffd45f);border:1px solid #eba33c;border-left:none"></div>
<div class="t" style="left:109.83px;top:172.42px;font-size:12.5px;color:#27313f;transform:scaleX(1.0000);transform-origin:0 0;">A</div>
<div class="t" style="left:270.83px;top:172.42px;font-size:12.5px;color:#27313f;transform:scaleX(1.0000);transform-origin:0 0;">B</div>
<div class="t" style="left:382.98px;top:172.42px;font-size:12.5px;color:#27313f;transform:scaleX(1.0000);transform-origin:0 0;">C</div>
<div class="t" style="left:446.98px;top:172.42px;font-size:12.5px;color:#27313f;transform:scaleX(1.0000);transform-origin:0 0;">D</div>
<div class="t" style="left:534.83px;top:172.42px;font-size:12.5px;color:#27313f;transform:scaleX(1.0000);transform-origin:0 0;">E</div>
<div class="t" style="left:622.69px;top:172.42px;font-size:12.5px;color:#27313f;transform:scaleX(1.0000);transform-origin:0 0;">F</div>
<div class="t" style="left:685.64px;top:172.42px;font-size:12.5px;color:#27313f;transform:scaleX(1.0000);transform-origin:0 0;">G</div>
<div class="t" style="left:749.98px;top:172.42px;font-size:12.5px;color:#27313f;transform:scaleX(1.0000);transform-origin:0 0;">H</div>
<div class="t" style="left:817.07px;top:172.42px;font-size:12.5px;color:#27313f;transform:scaleX(1.0000);transform-origin:0 0;">I</div>
<div class="t" style="left:17.24px;top:214.50px;font-size:13px;color:#27313f;transform:scaleX(0.9600);transform-origin:0 0;">1</div>
<div class="t" style="left:17.24px;top:234.50px;font-size:13px;color:#27313f;transform:scaleX(0.9600);transform-origin:0 0;">2</div>
<div class="t" style="left:17.24px;top:254.50px;font-size:13px;color:#27313f;transform:scaleX(0.9600);transform-origin:0 0;">3</div>
<div class="t" style="left:17.24px;top:274.50px;font-size:13px;color:#27313f;transform:scaleX(0.9600);transform-origin:0 0;">4</div>
<div class="t" style="left:17.24px;top:294.50px;font-size:13px;color:#27313f;transform:scaleX(0.9600);transform-origin:0 0;">5</div>
<div class="t" style="left:17.24px;top:314.50px;font-size:13px;color:#27313f;transform:scaleX(0.9600);transform-origin:0 0;">6</div>
<div class="t" style="left:17.24px;top:334.50px;font-size:13px;color:#27313f;transform:scaleX(0.9600);transform-origin:0 0;">7</div>
<div class="t" style="left:17.24px;top:354.50px;font-size:13px;color:#27313f;transform:scaleX(0.9600);transform-origin:0 0;">8</div>
<div class="t" style="left:17.24px;top:374.50px;font-size:13px;color:#27313f;transform:scaleX(0.9600);transform-origin:0 0;">9</div>
<div class="t" style="left:13.76px;top:394.50px;font-size:13px;color:#27313f;transform:scaleX(0.9600);transform-origin:0 0;">10</div>
<div class="t" style="left:14.23px;top:414.50px;font-size:13px;color:#27313f;transform:scaleX(0.9600);transform-origin:0 0;">11</div>
<div class="t" style="left:13.76px;top:434.50px;font-size:13px;color:#27313f;transform:scaleX(0.9600);transform-origin:0 0;">12</div>
<div class="t" style="left:13.76px;top:454.50px;font-size:13px;color:#27313f;transform:scaleX(0.9600);transform-origin:0 0;">13</div>
<div class="t" style="left:13.76px;top:474.50px;font-size:13px;color:#27313f;transform:scaleX(0.9600);transform-origin:0 0;">14</div>
<div class="t" style="left:13.76px;top:494.50px;font-size:13px;color:#27313f;transform:scaleX(0.9600);transform-origin:0 0;">15</div>
<div class="t" style="left:13.76px;top:514.50px;font-size:13px;color:#27313f;transform:scaleX(0.9600);transform-origin:0 0;">16</div>
<div class="t" style="left:13.76px;top:534.50px;font-size:13px;color:#27313f;transform:scaleX(0.9600);transform-origin:0 0;">17</div>
<div class="t" style="left:13.76px;top:554.50px;font-size:13px;color:#27313f;transform:scaleX(0.9600);transform-origin:0 0;">18</div>
<div class="t" style="left:13.76px;top:574.50px;font-size:13px;color:#27313f;transform:scaleX(0.9600);transform-origin:0 0;">19</div>
<div class="t" style="left:13.76px;top:594.50px;font-size:13px;color:#27313f;transform:scaleX(0.9600);transform-origin:0 0;">20</div>
<svg style="left:8px;top:167px" width="26" height="19"><polygon points="22,5 22,16 11,16" fill="#b7c3d4"/></svg>
<div class="a" style="left:194px;top:187px;width:1px;height:164px;background:#000"></div>
<div class="a" style="left:355px;top:187px;width:1px;height:164px;background:#000"></div>
<div class="a" style="left:419px;top:187px;width:1px;height:164px;background:#000"></div>
<div class="a" style="left:483px;top:187px;width:1px;height:164px;background:#000"></div>
<div class="a" style="left:594px;top:187px;width:1px;height:164px;background:#000"></div>
<div class="a" style="left:34px;top:230px;width:561px;height:1px;background:#000"></div>
<div class="a" style="left:34px;top:250px;width:561px;height:1px;background:#000"></div>
<div class="a" style="left:34px;top:270px;width:561px;height:1px;background:#000"></div>
<div class="a" style="left:34px;top:290px;width:561px;height:1px;background:#000"></div>
<div class="a" style="left:34px;top:310px;width:561px;height:1px;background:#000"></div>
<div class="a" style="left:34px;top:330px;width:561px;height:1px;background:#000"></div>
<div class="a" style="left:34px;top:350px;width:561px;height:1px;background:#000"></div>
<div class="t" style="left:43.50px;top:215.00px;font-size:13px;color:#000;transform:scaleX(1.0463);transform-origin:0 0;">Наименование товара</div>
<div class="t" style="left:239.00px;top:215.00px;font-size:13px;color:#000;transform:scaleX(1.0385);transform-origin:0 0;">Количество</div>
<div class="t" style="left:372.50px;top:215.00px;font-size:13px;color:#000;transform:scaleX(0.9755);transform-origin:0 0;">Цена</div>
<div class="t" style="left:431.00px;top:215.00px;font-size:13px;color:#000;transform:scaleX(1.0036);transform-origin:0 0;">Сумма</div>
<div class="t" style="left:486.00px;top:195.00px;font-size:13px;color:#000;transform:scaleX(1.0608);transform-origin:0 0;">Удельный вес от</div>
<div class="t" style="left:497.00px;top:215.00px;font-size:13px;color:#000;transform:scaleX(1.0372);transform-origin:0 0;">общей суммы</div>
<div class="t" style="left:37.00px;top:235.00px;font-size:13px;color:#000;transform:scaleX(1.0131);transform-origin:0 0;">Картофель</div>
<div class="t" style="left:37.00px;top:255.00px;font-size:13px;color:#000;transform:scaleX(0.9567);transform-origin:0 0;">Рыба</div>
<div class="t" style="left:37.00px;top:275.00px;font-size:13px;color:#000;transform:scaleX(0.9920);transform-origin:0 0;">Мясо</div>
<div class="t" style="left:37.00px;top:295.00px;font-size:13px;color:#000;transform:scaleX(0.9449);transform-origin:0 0;">Сахар</div>
<div class="t" style="left:37.00px;top:315.00px;font-size:13px;color:#000;transform:scaleX(0.9062);transform-origin:0 0;">Чай</div>
<div class="t" style="left:37.00px;top:335.00px;font-size:13px;color:#000;transform:scaleX(0.8472);transform-origin:0 0;font-weight:bold;">ВСЕГО</div>
<div class="t" style="left:338.53px;top:235.00px;font-size:13px;color:#000;transform:scaleX(0.9800);transform-origin:0 0;">25</div>
<div class="t" style="left:402.83px;top:235.00px;font-size:13px;color:#000;transform:scaleX(0.9800);transform-origin:0 0;">18</div>
<div class="t" style="left:458.96px;top:235.00px;font-size:13px;color:#000;transform:scaleX(0.9800);transform-origin:0 0;">450</div>
<div class="t" style="left:345.63px;top:255.00px;font-size:13px;color:#000;transform:scaleX(0.9800);transform-origin:0 0;">3</div>
<div class="t" style="left:395.76px;top:255.00px;font-size:13px;color:#000;transform:scaleX(0.9800);transform-origin:0 0;">164</div>
<div class="t" style="left:458.96px;top:255.00px;font-size:13px;color:#000;transform:scaleX(0.9800);transform-origin:0 0;">492</div>
<div class="t" style="left:516.44px;top:255.00px;font-size:13px;color:#000;transform:scaleX(0.9900);transform-origin:0 0;">0,073083779</div>
<div class="t" style="left:338.53px;top:275.00px;font-size:13px;color:#000;transform:scaleX(0.9800);transform-origin:0 0;">20</div>
<div class="t" style="left:395.76px;top:275.00px;font-size:13px;color:#000;transform:scaleX(0.9800);transform-origin:0 0;">267</div>
<div class="t" style="left:451.85px;top:275.00px;font-size:13px;color:#000;transform:scaleX(0.9800);transform-origin:0 0;">5340</div>
<div class="t" style="left:516.44px;top:275.00px;font-size:13px;color:#000;transform:scaleX(0.9900);transform-origin:0 0;">0,793226381</div>
<div class="t" style="left:345.63px;top:295.00px;font-size:13px;color:#000;transform:scaleX(0.9800);transform-origin:0 0;">3</div>
<div class="t" style="left:402.83px;top:295.00px;font-size:13px;color:#000;transform:scaleX(0.9800);transform-origin:0 0;">50</div>
<div class="t" style="left:458.96px;top:295.00px;font-size:13px;color:#000;transform:scaleX(0.9800);transform-origin:0 0;">150</div>
<div class="t" style="left:523.61px;top:295.00px;font-size:13px;color:#000;transform:scaleX(0.9900);transform-origin:0 0;">0,02228164</div>
<div class="t" style="left:334.99px;top:315.00px;font-size:13px;color:#000;transform:scaleX(0.9800);transform-origin:0 0;">0,3</div>
<div class="t" style="left:388.65px;top:315.00px;font-size:13px;color:#000;transform:scaleX(0.9800);transform-origin:0 0;">1000</div>
<div class="t" style="left:458.96px;top:315.00px;font-size:13px;color:#000;transform:scaleX(0.9800);transform-origin:0 0;">300</div>
<div class="t" style="left:523.61px;top:315.00px;font-size:13px;color:#000;transform:scaleX(0.9900);transform-origin:0 0;">0,04456328</div>
<div class="t" style="left:452.72px;top:335.00px;font-size:13px;color:#000;transform:scaleX(0.9500);transform-origin:0 0;font-weight:bold;">6732</div>
<div class="t" style="left:584.46px;top:335.00px;font-size:13px;color:#000;transform:scaleX(0.9900);transform-origin:0 0;">1</div>
<div class="a" style="left:419px;top:230px;width:64px;height:21px;border:1px solid #0000ff"></div>
<div class="a" style="left:418.4px;top:229px;width:4.6px;height:4.6px;background:#0000ff"></div>
<div class="a" style="left:480.2px;top:229px;width:2.4px;height:4.6px;background:#0000ff"></div>
<div class="a" style="left:418.4px;top:247.3px;width:4.6px;height:4.6px;background:#0000ff"></div>
<div class="a" style="left:480.2px;top:247.3px;width:2.4px;height:4.6px;background:#0000ff"></div>
<div class="a" style="left:419px;top:330px;width:65px;height:21px;border:1px solid #2a8a2a"></div>
<div class="a" style="left:418.3px;top:329px;width:4.7px;height:4.7px;background:#2a8a2a"></div>
<div class="a" style="left:480.2px;top:329px;width:4.7px;height:4.7px;background:#2a8a2a"></div>
<div class="a" style="left:418.3px;top:347.2px;width:4.7px;height:4.7px;background:#2a8a2a"></div>
<div class="a" style="left:480.2px;top:347.2px;width:4.7px;height:4.7px;background:#2a8a2a"></div>
<div class="a" style="left:484px;top:231px;width:110px;height:19px;background:#fff"></div>
<div class="a" style="left:484px;top:229.5px;width:1.2px;height:21.5px;background:#ffff00"></div>
<div class="a" style="left:484px;top:250px;width:111px;height:1px;background:#000"></div>
<div class="a" style="left:594px;top:231px;width:1px;height:20px;background:#000"></div>
<div class="a" style="left:593px;top:248px;width:4px;height:4px;background:#000"></div>
<div class="t" style="left:486.30px;top:235.00px;font-size:13px;color:#000;transform:scaleX(0.8547);transform-origin:0 0;">=</div>
<div class="t" style="left:493.80px;top:235.00px;font-size:13px;color:#0000ff;transform:scaleX(0.9032);transform-origin:0 0;">D2</div>
<div class="t" style="left:509.50px;top:235.00px;font-size:13px;color:#000;transform:scaleX(1.1813);transform-origin:0 0;">/</div>
<div class="t" style="left:516.80px;top:235.00px;font-size:13px;color:#2e8b2e;transform:scaleX(0.8719);transform-origin:0 0;">$D7</div>
<div class="a" style="left:538.5px;top:231px;width:1.2px;height:18px;background:#000"></div>
<div class="a" style="left:512px;top:226.6px;width:37.8px;height:27.2px;border:4.600px solid #ed1c24;border-radius:8px"></div>
<div class="a" style="left:845px;top:167px;width:16px;height:438px;background:linear-gradient(90deg,#e3e7ec,#eef0f3 40%,#e6e9ee)"></div>
<div class="a" style="left:846px;top:167px;width:15px;height:8px;background:#fff;border:1px solid #8e8088"></div>
<div class="a" style="left:850px;top:170px;width:7px;height:1px;background:#8b8f98"></div>
<svg style="left:845px;top:175px" width="16" height="14"><polygon points="8,5.5 12.5,11 3.5,11" fill="#444a52"/></svg>
<div class="a" style="left:846px;top:192px;width:14px;height:376px;border:1px solid #9aa0a9;border-radius:2px;background:linear-gradient(90deg,#f6f7f9 0,#eceef2 45%,#dadee4 100%)"></div>
<div class="a" style="left:849px;top:373px;width:8px;height:1px;background:#7d838c"></div>
<div class="a" style="left:849px;top:376px;width:8px;height:1px;background:#7d838c"></div>
<div class="a" style="left:849px;top:379px;width:8px;height:1px;background:#7d838c"></div>
<div class="a" style="left:849px;top:382px;width:8px;height:1px;background:#7d838c"></div>
<svg style="left:845px;top:590px" width="16" height="14"><polygon points="3.5,4 12.5,4 8,9.5" fill="#444a52"/></svg>
<div class="a" style="left:8px;top:605px;width:853px;height:16px;background:linear-gradient(180deg,#d9dee5,#e4e8ed 50%,#dde2e8);border-top:1px solid #8f959e"></div>
<div class="a" style="left:8px;top:606px;width:63px;height:14px;background:#e2e7ee"></div>
<svg style="left:8px;top:605px" width="70" height="16">
<g fill="#4b5058">
<rect x="6" y="5" width="1.3" height="7"/><polygon points="12,5 12,12 7.5,8.5"/>
<polygon points="27,5 27,12 22,8.5"/>
<polygon points="36,5 36,12 41,8.5"/>
<polygon points="50,5 50,12 54.5,8.5"/><rect x="55" y="5" width="1.3" height="7"/>
</g></svg>
<svg style="left:60px;top:605px" width="230" height="16">
<polygon points="166,14.500 180,1 212,1 198,14.500" fill="#eceff3" stroke="#a9b0ba" stroke-width="1"/>
<polygon points="112,14.500 126,1 174,1 160,14.500" fill="#eceff3" stroke="#a9b0ba" stroke-width="1"/>
<polygon points="60,14.500 74,1 122,1 108,14.500" fill="#eceff3" stroke="#a9b0ba" stroke-width="1"/>
<polygon points="11,0 11,14.500 60,14.500 75,0" fill="#ffffff"/>
<polyline points="11,0.500 11,14.500 60,14.500 75,0.500" fill="none" stroke="#9aa1ab" stroke-width="1"/>
</svg>
<div class="t" style="left:80.00px;top:606.84px;font-size:12px;color:#1c1c1c;transform:scaleX(1.0283);transform-origin:0 0;font-weight:bold;">Лист1</div>
<div class="t" style="left:135.00px;top:606.84px;font-size:12px;color:#333a44;transform:scaleX(0.9768);transform-origin:0 0;">Лист2</div>
<div class="t" style="left:187.50px;top:606.84px;font-size:12px;color:#333a44;transform:scaleX(0.9768);transform-origin:0 0;">Лист3</div>
<svg style="left:240px;top:606px" width="18" height="14">
<rect x="4.5" y="3.5" width="10" height="8" rx="1.5" fill="#f4f7fb" stroke="#5f7fae" stroke-width="1"/>
<rect x="6" y="10" width="6" height="2" fill="#5f7fae"/>
<path d="M4,0 L5,2.6 L7.8,3 L5.6,4.6 L6.4,7.4 L4,5.8 L1.6,7.4 L2.4,4.6 L0.2,3 L3,2.6 Z" fill="#f5b128" stroke="#d98c10" stroke-width=".4"/>
</svg>
<div class="a" style="left:510px;top:606px;width:335px;height:14px;background:linear-gradient(180deg,#e2e5ea,#eceef2 50%,#e4e7ec)"></div>
<div class="a" style="left:510px;top:606px;width:8px;height:14px;background:#fff;border:1px solid #8e8088"></div>
<div class="a" style="left:514px;top:609px;width:1px;height:8px;background:#5a5e66"></div>
<svg style="left:520px;top:606px" width="14" height="14"><polygon points="9.5,3 9.5,11.5 3.5,7.2" fill="#3d424a"/></svg>
<div class="a" style="left:535px;top:606px;width:249px;height:14px;border:1px solid #9aa0a9;border-radius:3px;background:linear-gradient(180deg,#f7f8fa 0,#eceef2 45%,#d9dde3 100%)"></div>
<div class="a" style="left:656.0px;top:609px;width:1px;height:8px;background:#7d838c"></div>
<div class="a" style="left:658.4px;top:609px;width:1px;height:8px;background:#7d838c"></div>
<div class="a" style="left:660.8px;top:609px;width:1px;height:8px;background:#7d838c"></div>
<div class="a" style="left:663.2px;top:609px;width:1px;height:8px;background:#7d838c"></div>
<svg style="left:822px;top:606px" width="14" height="14"><polygon points="4.5,3 4.5,11.5 10,7.2" fill="#3d424a"/></svg>
<div class="a" style="left:837px;top:606px;width:8px;height:14px;background:#fff;border:1px solid #8e8088"></div>
<div class="a" style="left:841px;top:609px;width:1px;height:8px;background:#5a5e66"></div>
<div class="a" style="left:845px;top:605px;width:16px;height:16px;background:#e1e5ea"></div>
<div class="a" style="left:8px;top:621px;width:853px;height:22px;background:linear-gradient(180deg,#f2f3f5 0,#e4e7eb 8%,#dcdfe4 35%,#cfd3d9 60%,#c5c9d0 88%,#c9cdd3 100%);border-top:1px solid #8f959e"></div>
<div class="t" style="left:16.50px;top:626.69px;font-size:11px;color:#3b2a2a;transform:scaleX(1.0086);transform-origin:0 0;">Правка</div>
<div class="a" style="left:64px;top:624px;width:1px;height:18px;background:#9a9fa8"></div>
<div class="a" style="left:65px;top:624px;width:1px;height:18px;background:#f3f5f7"></div>
<div class="a" style="left:100px;top:624px;width:1px;height:18px;background:#9a9fa8"></div>
<div class="a" style="left:101px;top:624px;width:1px;height:18px;background:#f3f5f7"></div>
<svg style="left:74px;top:624px" width="16" height="15">
<rect x="1.5" y="2.5" width="13" height="11" fill="#fff" stroke="#5b7db5" stroke-width="1"/>
<rect x="2" y="3" width="12" height="2.5" fill="#6f96d1"/>
<g fill="#7aa0d8"><rect x="3.5" y="7" width="3" height="1.5"/><rect x="7.5" y="7" width="5.5" height="1.5"/><rect x="3.5" y="10" width="3" height="1.5"/><rect x="7.5" y="10" width="5.5" height="1.5"/></g>
<circle cx="3.5" cy="3.2" r="2.8" fill="#e0662a" stroke="#b84a14" stroke-width=".5"/>
</svg>
<div class="a" style="left:605px;top:624px;width:1px;height:18px;background:#9a9fa8"></div>
<div class="a" style="left:606px;top:624px;width:1px;height:18px;background:#f3f5f7"></div>
<svg style="left:610px;top:624px" width="64" height="16">
<rect x="2.5" y="3.5" width="13" height="9" fill="#fff" stroke="#5a5f68" stroke-width="1"/>
<path d="M2.5,6.5H15.5M2.5,9.5H15.5M6.8,3.5V12.5M11.2,3.5V12.5" stroke="#5a5f68" stroke-width="1" fill="none"/>
<rect x="20.5" y="2.5" width="14" height="12" fill="#d8dbe0" stroke="#5a5f68" stroke-width="1.4"/>
<rect x="23.5" y="5" width="8" height="7" fill="#fff" stroke="#5a5f68" stroke-width="1"/>
<path d="M25,7.5H30M25,9.5H30" stroke="#8a8f98" stroke-width="1"/>
<rect x="39.5" y="2.5" width="14" height="11" fill="#c9cdd3" stroke="#5a5f68" stroke-width="1"/>
<rect x="41.5" y="3" width="4.5" height="7" fill="#fff" stroke="#5a5f68" stroke-width="1"/>
<rect x="47" y="3" width="4.5" height="7" fill="#fff" stroke="#5a5f68" stroke-width="1"/>
</svg>
<div class="t" style="left:675.00px;top:627.69px;font-size:11px;color:#8e939b;transform:scaleX(0.9242);transform-origin:0 0;">100%</div>
<div class="a" style="left:725px;top:631.5px;width:98px;height:1px;background:#9ea3ab"></div>
<div class="a" style="left:725px;top:632.5px;width:98px;height:1px;background:#f4f5f7"></div>
<div class="a" style="left:775px;top:627.5px;width:1px;height:9px;background:#9ea3ab"></div>
<svg style="left:709.200px;top:621.500px" width="130" height="22">
<circle cx="9" cy="10.5" r="7" fill="#e6e8ec" stroke="#fbfbfc" stroke-width="1.2"/>
<rect x="5" y="9.7" width="8" height="1.8" fill="#b8bcc4"/>
<circle cx="124.5" cy="10.5" r="7" fill="#e6e8ec" stroke="#fbfbfc" stroke-width="1.2"/>
<rect x="120.5" y="9.7" width="8" height="1.8" fill="#b8bcc4"/><rect x="123.6" y="6.5" width="1.8" height="8" fill="#b8bcc4"/>
</svg>
<div class="a" style="left:858px;top:632px;width:2px;height:2px;background:#f6f7f9"></div>
<div class="a" style="left:857px;top:631px;width:2px;height:2px;background:#9ca1a9"></div>
<div class="a" style="left:855px;top:635px;width:2px;height:2px;background:#f6f7f9"></div>
<div class="a" style="left:854px;top:634px;width:2px;height:2px;background:#9ca1a9"></div>
<div class="a" style="left:858px;top:635px;width:2px;height:2px;background:#f6f7f9"></div>
<div class="a" style="left:857px;top:634px;width:2px;height:2px;background:#9ca1a9"></div>
<div class="a" style="left:852px;top:638px;width:2px;height:2px;background:#f6f7f9"></div>
<div class="a" style="left:851px;top:637px;width:2px;height:2px;background:#9ca1a9"></div>
<div class="a" style="left:855px;top:638px;width:2px;height:2px;background:#f6f7f9"></div>
<div class="a" style="left:854px;top:637px;width:2px;height:2px;background:#9ca1a9"></div>
<div class="a" style="left:858px;top:638px;width:2px;height:2px;background:#f6f7f9"></div>
<div class="a" style="left:857px;top:637px;width:2px;height:2px;background:#9ca1a9"></div>
<div class="a" style="left:286.5px;top:140px;width:36px;height:26px;border:5px solid #ed1c24;border-radius:8px"></div>
</div></body></html>
